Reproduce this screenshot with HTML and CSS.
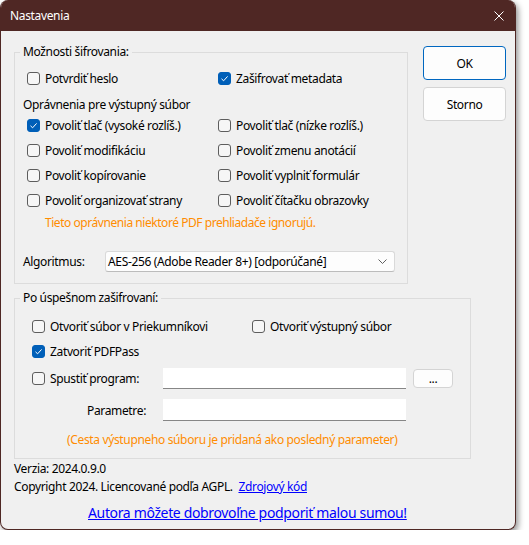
FILE: index.html
```html
<!DOCTYPE html>
<html lang="sk">
<head>
<meta charset="utf-8">
<title>Nastavenia</title>
<link rel="stylesheet" href="styles.css">
</head>
<body>
<div class="window">
  <div class="titlebar">
    <span class="title">Nastavenia</span>
    <svg class="close" width="10" height="10" viewBox="0 0 10 10"><path d="M0.5 0.5 L9.5 9.5 M9.5 0.5 L0.5 9.5" stroke="#fff" stroke-width="1" fill="none"/></svg>
  </div>
  <div class="content">
    <div class="top">
      <div class="group g1">
        <div class="legend">Možnosti šifrovania:</div>
        <div class="grid2 first-row">
          <div class="chk"><span class="box"></span>Potvrdiť heslo</div>
          <div class="chk"><span class="box on"><svg width="13" height="13" viewBox="0 0 13 13"><path d="M3.5 6.8 L5.6 8.8 L9.6 4.4" stroke="#fff" stroke-width="1" fill="none"/></svg></span>Zašifrovať metadata</div>
        </div>
        <div class="sub">Oprávnenia pre výstupný súbor</div>
        <div class="grid2 perms">
          <div class="chk"><span class="box on"><svg width="13" height="13" viewBox="0 0 13 13"><path d="M3.5 6.8 L5.6 8.8 L9.6 4.4" stroke="#fff" stroke-width="1" fill="none"/></svg></span>Povoliť tlač (vysoké rozlíš.)</div>
          <div class="chk"><span class="box"></span>Povoliť tlač (nízke rozlíš.)</div>
          <div class="chk"><span class="box"></span>Povoliť modifikáciu</div>
          <div class="chk"><span class="box"></span>Povoliť zmenu anotácií</div>
          <div class="chk"><span class="box"></span>Povoliť kopírovanie</div>
          <div class="chk"><span class="box"></span>Povoliť vyplniť formulár</div>
          <div class="chk"><span class="box"></span>Povoliť organizovať strany</div>
          <div class="chk"><span class="box"></span>Povoliť čítačku obrazovky</div>
        </div>
        <div class="note note1">Tieto oprávnenia niektoré PDF prehliadače ignorujú.</div>
        <div class="algo">
          <span class="algo-label">Algoritmus:</span>
          <div class="combo">
            <span>AES-256 (Adobe Reader 8+) [odporúčané]</span>
            <svg width="9" height="5" viewBox="0 0 9 5"><path d="M0.5 0.5 L4.5 4.5 L8.5 0.5" stroke="#606060" stroke-width="1" fill="none"/></svg>
          </div>
        </div>
      </div>
      <div class="buttons">
        <button class="btn default">OK</button>
        <button class="btn">Storno</button>
      </div>
    </div>

    <div class="group g2">
      <div class="legend">Po úspešnom zašifrovaní:</div>
      <div class="grid2b r1">
        <div class="chk"><span class="box"></span>Otvoriť súbor v Priekumníkovi</div>
        <div class="chk"><span class="box"></span>Otvoriť výstupný súbor</div>
      </div>
      <div class="r2">
        <div class="chk"><span class="box on"><svg width="13" height="13" viewBox="0 0 13 13"><path d="M3.5 6.8 L5.6 8.8 L9.6 4.4" stroke="#fff" stroke-width="1" fill="none"/></svg></span>Zatvoriť PDFPass</div>
      </div>
      <div class="r3">
        <div class="chk lbl"><span class="box"></span>Spustiť program:</div>
        <div class="input"></div>
        <button class="btn small">...</button>
      </div>
      <div class="r4">
        <span class="param-label">Parametre:</span>
        <div class="input tall"></div>
      </div>
      <div class="note note2">(Cesta výstupneho súboru je pridaná ako posledný parameter)</div>
    </div>

    <div class="footer">
      <div class="line">Verzia: 2024.0.9.0</div>
      <div class="line">Copyright 2024. Licencované podľa AGPL. <a class="link src" href="#">Zdrojový kód</a></div>
      <div class="donate"><a class="link" href="#">Autora môžete dobrovoľne podporiť malou sumou!</a></div>
    </div>
  </div>
</div>
</body>
</html>
```

FILE: styles.css
```css
* { box-sizing: border-box; }

body {
  margin: 0;
  background: #ffffff;
  font-family: "Noto Sans", "Open Sans", sans-serif;
  font-size: 12px;
  letter-spacing: -0.35px;
  color: #000;
}

.window {
  width: 516px;
  height: 530px;
  background: #f0f0f0;
  border: 1px solid #4f2724;
  border-top: 0;
  border-radius: 8px;
  overflow: hidden;
  box-shadow: 2px 3px 6px rgba(0, 0, 0, 0.45);
}

.titlebar {
  height: 31px;
  background: #4f2724;
  color: #fff;
  display: flex;
  align-items: center;
  justify-content: space-between;
  padding: 0 11px 0 9px;
}

.title { line-height: 16px; }

.content { padding-left: 13px; }

.top {
  display: flex;
  align-items: flex-start;
}

.group {
  border: 1px solid #dcdcdc;
}

.legend {
  width: max-content;
  margin: -9px 0 0 -3px;
  padding: 0 3px;
  line-height: 16px;
  background: #f0f0f0;
}

.g1 {
  width: 394px;
  margin-top: 21px;
  padding: 0 0 11px 8px;
}

.grid2 {
  display: grid;
  grid-template-columns: 191px auto;
  grid-auto-rows: 20px;
  row-gap: 5px;
  margin-left: 4px;
}

.first-row { margin-top: 8px; }

.sub {
  margin-top: 7px;
  line-height: 20px;
}

.chk {
  display: flex;
  align-items: center;
  gap: 5px;
  height: 20px;
  white-space: nowrap;
}

.box {
  width: 13px;
  height: 13px;
  flex: none;
  border: 1px solid #5d5d5d;
  border-radius: 3px;
  background: #f6f6f6;
  display: flex;
}

.box.on {
  background: #005fb8;
  border-color: #005fb8;
}

.box.on svg { margin: -1px; }

.note {
  color: #ff8c00;
  line-height: 20px;
}

.note1 {
  margin-top: 3px;
  padding-left: 22px;
  letter-spacing: -0.45px;
}

.algo {
  margin-top: 18px;
  display: flex;
  align-items: center;
  height: 21px;
}

.algo-label { width: 82px; }

.combo {
  width: 290px;
  height: 21px;
  border: 1px solid #d9d9d9;
  border-bottom-color: #bcbcbc;
  border-radius: 3px;
  background: #fdfdfd;
  display: flex;
  align-items: center;
  justify-content: space-between;
  padding: 0 7px 0 2px;
}

.buttons {
  display: flex;
  flex-direction: column;
  gap: 7px;
  margin: 15px 0 0 15px;
}

.btn {
  font-family: inherit;
  font-size: 12px;
  letter-spacing: inherit;
  color: #000;
  width: 83px;
  height: 34px;
  background: #fdfdfd;
  border: 1px solid #d4d4d4;
  border-radius: 4px;
  padding: 0;
}

.btn.default { border-color: #0067c0; }

.g2 {
  width: 457px;
  margin-top: 14px;
  padding: 0 0 8px 8px;
}

.grid2b {
  display: grid;
  grid-template-columns: 220px auto;
  margin-left: 9px;
}

.r1 { margin-top: 10px; }
.r2 { margin: 5px 0 0 9px; }

.r3 {
  margin: 7px 0 0 9px;
  display: flex;
  align-items: flex-start;
  height: 21px;
}

.lbl { width: 131px; height: 21px; }

.input {
  width: 243px;
  height: 21px;
  background: #fff;
  border-bottom: 1px solid #868686;
}

.input.tall { height: 22px; }

.btn.small {
  width: 40px;
  height: 19px;
  margin: 1px 0 0 7px;
  line-height: 12px;
}

.r4 {
  margin: 10px 0 0 9px;
  display: flex;
  align-items: center;
  height: 22px;
}

.param-label {
  width: 131px;
  padding-right: 17px;
  text-align: right;
}

.note2 {
  margin-top: 9px;
  padding-left: 44px;
}

.footer { padding-top: 1px; }

.line { line-height: 18px; }

.link { color: #0000ff; text-decoration: underline; }

.src { margin-left: 3px; }

.donate {
  margin: 8px 0 0 74px;
  font-size: 14px;
  line-height: 18px;
}
```
